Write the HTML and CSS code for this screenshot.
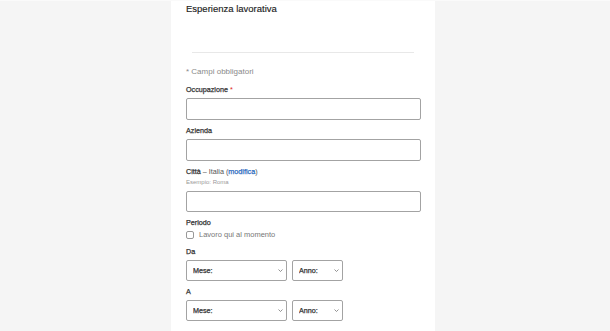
FILE: index.html
```html
<!DOCTYPE html>
<html lang="it">
<head>
    <meta charset="UTF-8">
    <meta name="viewport" content="width=device-width, initial-scale=1.0">
    <title>Esperienza lavorativa</title>
    <link rel="stylesheet" href="styles.css">
</head>
<body>
    <div class="page">
        <div class="panel">
            <h1 class="title">Esperienza lavorativa</h1>
            <hr class="divider">

            <p class="required-note">* Campi obbligatori</p>

            <div class="field">
                <label class="label" for="job">Occupazione <span class="star">*</span></label>
                <input type="text" id="job" class="text-input">
            </div>

            <div class="field">
                <label class="label" for="company">Azienda</label>
                <input type="text" id="company" class="text-input">
            </div>

            <div class="field">
                <label class="label city-label" for="city"><b>Città</b> – Italia (<a href="#" class="edit-link">modifica</a>)</label>
                <div class="hint">Esempio: Roma</div>
                <input type="text" id="city" class="text-input short">
            </div>

            <div class="field">
                <div class="label">Periodo</div>
                <label class="check-row">
                    <span class="checkbox"></span>
                    Lavoro qui al momento
                </label>
            </div>

            <div class="field spaced">
                <div class="label">Da</div>
                <div class="date-row">
                    <div class="select-wrap month">
                        <select class="select"><option>Mese:</option></select>
                        <svg class="chevron" width="5" height="3" viewBox="0 0 5 3"><path d="M0.5 0.5 L2.5 2.5 L4.5 0.5" fill="none" stroke="#777" stroke-width="0.8"/></svg>
                    </div>
                    <div class="select-wrap year">
                        <select class="select"><option>Anno:</option></select>
                        <svg class="chevron" width="5" height="3" viewBox="0 0 5 3"><path d="M0.5 0.5 L2.5 2.5 L4.5 0.5" fill="none" stroke="#777" stroke-width="0.8"/></svg>
                    </div>
                </div>
            </div>

            <div class="field">
                <div class="label">A</div>
                <div class="date-row">
                    <div class="select-wrap month">
                        <select class="select"><option>Mese:</option></select>
                        <svg class="chevron" width="5" height="3" viewBox="0 0 5 3"><path d="M0.5 0.5 L2.5 2.5 L4.5 0.5" fill="none" stroke="#777" stroke-width="0.8"/></svg>
                    </div>
                    <div class="select-wrap year">
                        <select class="select"><option>Anno:</option></select>
                        <svg class="chevron" width="5" height="3" viewBox="0 0 5 3"><path d="M0.5 0.5 L2.5 2.5 L4.5 0.5" fill="none" stroke="#777" stroke-width="0.8"/></svg>
                    </div>
                </div>
            </div>
        </div>
    </div>
</body>
</html>
```

FILE: styles.css
```css
body {
    margin: 0;
    background-color: #f5f5f5;
    font-family: "Liberation Sans", Arial, sans-serif;
    color: #333;
    border-top: 1px solid #fafafa;
}
.page {
    padding-left: 171px;
}
.panel {
    background: white;
    width: 264px;
    min-height: 331px;
    box-sizing: border-box;
    padding: 2px 14px 0 15px;
}
.title {
    margin: 0;
    font-size: 9.5px;
    line-height: 12px;
    font-weight: normal;
    color: #222;
    -webkit-text-stroke: 0.15px #222;
}
.divider {
    border: none;
    border-top: 1px solid #e8e8e8;
    margin: 37px 7px 0 6px;
}
.required-note {
    margin: 14px 0 0;
    font-size: 8px;
    line-height: 10px;
    color: #8a8a8a;
}
.field {
    margin-top: 5px;
}
.required-note + .field {
    margin-top: 7px;
}
.field.spaced {
    margin-top: 6px;
}
.label {
    display: block;
    font-size: 7.2px;
    line-height: 10px;
    padding-top: 1px;
    color: #333;
    -webkit-text-stroke: 0.25px #333;
    margin-bottom: 3px;
}
.label b {
    font-weight: normal;
}
.city-label {
    margin-bottom: 1px;
    -webkit-text-stroke: 0;
    color: #555;
}
.city-label b {
    color: #333;
    -webkit-text-stroke: 0.25px #333;
}
.star {
    color: #d22;
    -webkit-text-stroke: 0;
}
.edit-link {
    color: #2b6bbf;
    -webkit-text-stroke: 0.25px #2b6bbf;
    text-decoration: none;
}
.hint {
    font-size: 6px;
    line-height: 8px;
    color: #999;
    margin-bottom: 5px;
}
.text-input {
    display: block;
    width: 100%;
    height: 22px;
    box-sizing: border-box;
    border: 1px solid #a3a3a3;
    border-radius: 2px;
    background: white;
    margin: 0;
}
.text-input.short {
    height: 21px;
}
.check-row {
    display: flex;
    align-items: center;
    gap: 5px;
    margin-top: -1px;
    font-size: 7.5px;
    line-height: 10px;
    color: #777;
}
.checkbox {
    width: 8px;
    height: 8px;
    box-sizing: border-box;
    border: 1px solid #999;
    border-radius: 2px;
    background: white;
}
.date-row {
    display: flex;
    gap: 5px;
    margin-top: 2px;
}
.select-wrap {
    position: relative;
}
.month {
    width: 101px;
}
.year {
    width: 51px;
}
.select {
    appearance: none;
    -webkit-appearance: none;
    display: block;
    width: 100%;
    height: 21px;
    box-sizing: border-box;
    border: 1px solid #a3a3a3;
    border-radius: 2px;
    background: white;
    padding: 0 0 0 6px;
    margin: 0;
    font-family: "Liberation Sans", Arial, sans-serif;
    font-size: 7.2px;
    color: #333;
    -webkit-text-stroke: 0.25px #333;
}
.chevron {
    position: absolute;
    right: 4px;
    top: 9px;
}
```
